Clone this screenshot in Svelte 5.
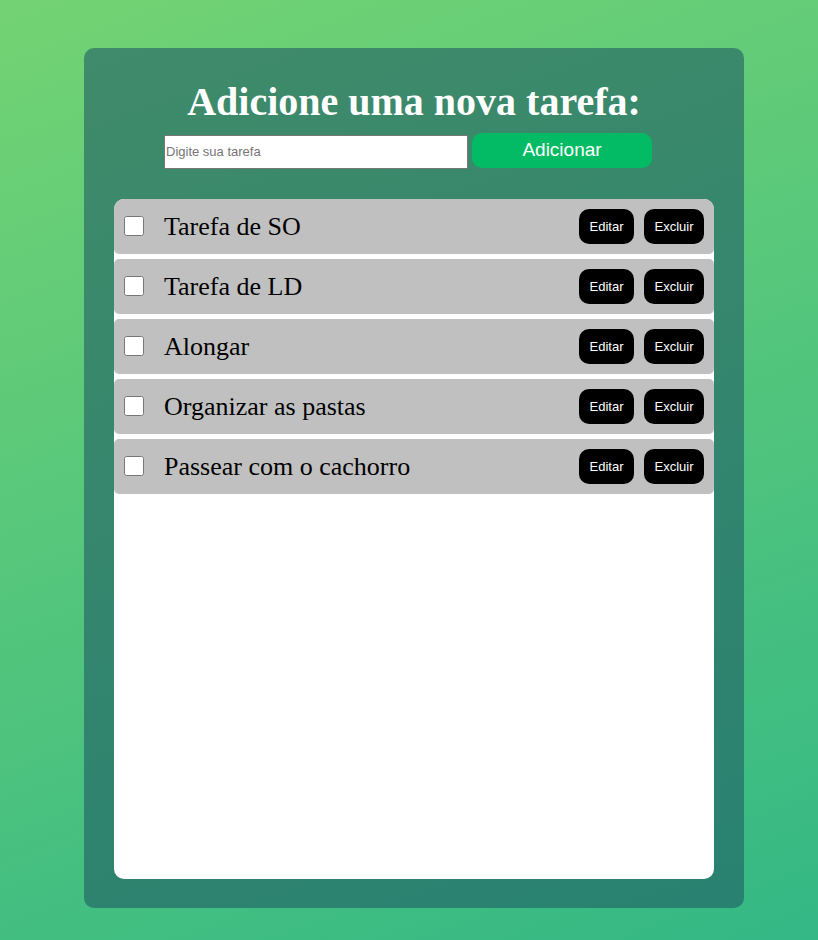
<script>
  let nextId = 6;
  let draft = $state('');
  let tasks = $state([
    { id: 1, title: 'Tarefa de SO', done: false },
    { id: 2, title: 'Tarefa de LD', done: false },
    { id: 3, title: 'Alongar', done: false },
    { id: 4, title: 'Organizar as pastas', done: false },
    { id: 5, title: 'Passear com o cachorro', done: false }
  ]);

  function add(event) {
    event.preventDefault();
    const title = draft.trim();
    if (!title) return;
    tasks.push({ id: nextId++, title, done: false });
    draft = '';
  }

  function edit(task) {
    const title = prompt('Editar tarefa', task.title);
    if (title) task.title = title;
  }

  function remove(id) {
    tasks = tasks.filter((task) => task.id !== id);
  }
</script>

<main>
  <section class="panel">
    <h1><label for="new-task">Adicione uma nova tarefa:</label></h1>
    <form onsubmit={add}>
      <input id="new-task" class="field" type="text" placeholder="Digite sua tarefa" bind:value={draft} />
      <button class="add" type="submit">Adicionar</button>
    </form>
    <ul>
      {#each tasks as task (task.id)}
        <li>
          <input id="task-{task.id}" class="check" type="checkbox" bind:checked={task.done} />
          <label class="title" for="task-{task.id}">{task.title}</label>
          <button class="action edit" type="button" onclick={() => edit(task)}>Editar</button>
          <button class="action remove" type="button" onclick={() => remove(task.id)}>Excluir</button>
        </li>
      {/each}
    </ul>
  </section>
</main>

<style>
  :global(body) {
    margin: 0;
  }

  main {
    box-sizing: border-box;
    min-height: 100vh;
    padding: 48px 0 32px 10px;
    display: flex;
    justify-content: center;
    align-items: stretch;
    font-family: 'Liberation Serif', 'Times New Roman', serif;
    background: linear-gradient(160deg, #73d373, #34b885);
  }

  .panel {
    box-sizing: border-box;
    width: 100%;
    max-width: 660px;
    padding: 30px 30px 29px;
    display: flex;
    flex-direction: column;
    border-radius: 10px;
    background: rgba(31, 91, 100, 0.6);
  }

  h1 {
    margin: 0;
    font-size: 40px;
    line-height: 48px;
    text-align: center;
    color: #fff;
  }

  form {
    display: flex;
    align-items: flex-end;
    gap: 4px;
    margin: 7px 62px 30px 50px;
  }

  .field {
    box-sizing: border-box;
    flex: 1;
    min-width: 0;
    height: 34px;
    padding: 0 1px 2px;
    border: 1px solid #767676;
    border-radius: 0;
    background: #fff;
    font: 13px 'Liberation Sans', Arial, sans-serif;
  }

  .field::placeholder {
    color: #757575;
  }

  button {
    border: 0;
    border-radius: 10px;
    color: #fff;
    font-family: 'Liberation Sans', Arial, sans-serif;
    cursor: pointer;
  }

  .add {
    width: 180px;
    height: 35px;
    margin-bottom: 1px;
    padding: 0 0 2px;
    font-size: 19px;
    background: #04bb65;
  }

  ul {
    flex: 1;
    display: flex;
    flex-direction: column;
    gap: 5px;
    margin: 0;
    padding: 0;
    list-style: none;
    overflow: hidden;
    border-radius: 10px;
    background: #fff;
  }

  li {
    display: flex;
    align-items: flex-start;
    gap: 10px;
    padding: 10px;
    border-radius: 5px;
    background: #c0c0c0;
  }

  .check {
    width: 20px;
    height: 20px;
    margin: 7px 10px 0 0;
  }

  .title {
    flex: 1;
    font-size: 26px;
    line-height: 35px;
    color: #000;
  }

  .action {
    height: 35px;
    padding: 0;
    font-size: 13px;
    background: #000;
  }

  .edit {
    width: 55px;
  }

  .remove {
    width: 60px;
  }
</style>
